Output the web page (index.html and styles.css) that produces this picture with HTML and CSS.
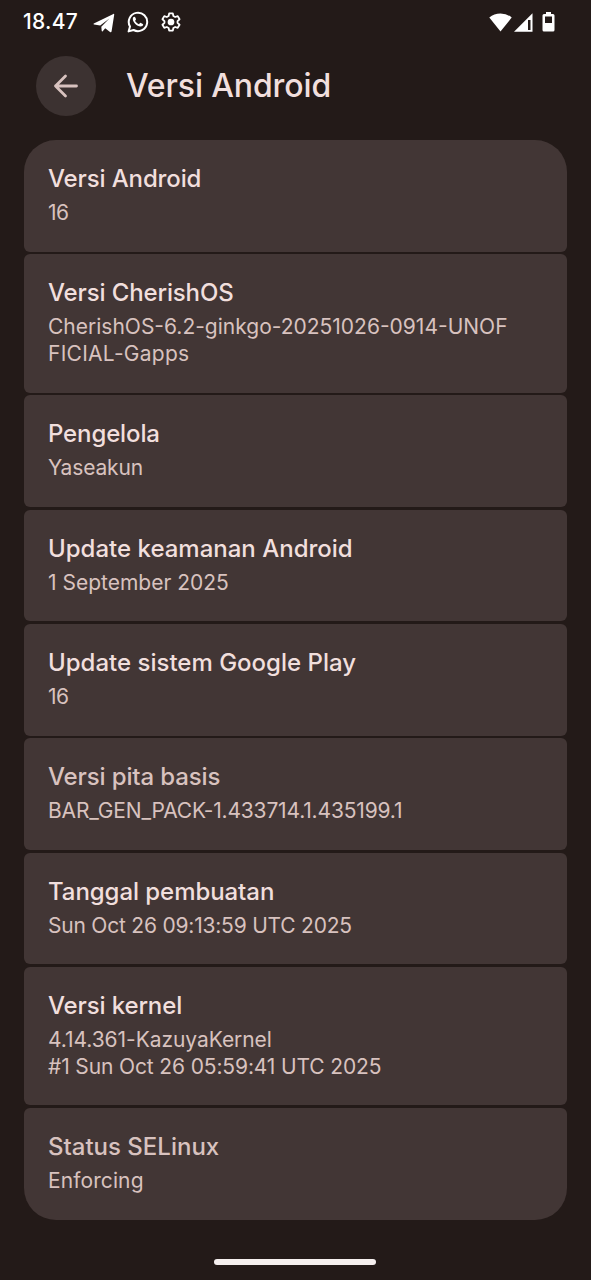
FILE: index.html
```html
<!DOCTYPE html>
<html lang="id">
<head>
<meta charset="utf-8">
<title>Versi Android</title>
<link rel="stylesheet" href="styles.css">
</head>
<body>
<div class="screen">
  <header class="status">
    <span class="clock">18.47</span>
    <svg class="telegram" viewBox="0 0 22 20"><path d="M.8 10.500 20.400.9c.6-.3.9.1.8.8L18.600 18.300c-.2.9-.8 1.100-1.600.6L12.200 15.300l-2.500 2.900c-.5.5-.9.3-1-.4L8.300 13.800 16.400 5.500 7.200 12.600 1 11.400c-.6-.2-.6-.6-.2-.9Z"/></svg>
    <svg class="whatsapp" viewBox="0 0 22 22"><path class="line" d="M1.600 20.400 3 15.500A9.200 9.200 0 1 1 6.600 19Z"/><path d="M7.300 5.800c-.7 0-1.500.9-1.500 2.100 0 3.100 4.200 7.500 7.700 7.500 1.500 0 2.700-1 2.700-2 0-.4-2.500-1.600-2.900-1.600-.5 0-.9 1.400-1.400 1.400-.9 0-3.700-2.500-3.700-3.400 0-.5.8-1 .8-1.500 0-.4-.8-2.500-1.700-2.500Z"/></svg>
    <svg class="gear" viewBox="0 0 22 22"><path class="line" d="M9 1.500h4l.6 2.900 2 1.100 2.800-1 2 3.500-2.200 2v2l2.200 2-2 3.500-2.800-1-2 1.100-.6 2.900H9l-.6-2.900-2-1.100-2.800 1-2-3.500 2.200-2v-2l-2.200-2 2-3.500 2.800 1 2-1.100Z"/><circle cx="11" cy="11" r="3.700"/></svg>
    <span class="spacer"></span>
    <svg class="wifi" viewBox="0 0 23 19"><path d="M.3 4.500Q5 .5 11.500.5T22.700 4.500L11.500 18.500Z"/></svg>
    <svg class="signal" viewBox="0 0 19 19"><path fill-rule="evenodd" d="M18.500.2V18.700H0ZM14 7v10h2.500V7Z"/></svg>
    <svg class="battery" viewBox="0 0 13 20"><path fill-rule="evenodd" d="M4 0h5v2h2q1.500 0 1.500 1.500v14.500q0 1.500-1.500 1.500H2Q.5 19.500.5 18V3.500Q.5 2 2 2h2ZM3 4.500v6.500h7V4.500Z"/></svg>
  </header>
  <div class="toolbar">
    <div class="back"><svg class="arrow" viewBox="0 0 26 26"><path d="M12.500 3 2.500 13l10 10M2.500 13H23.500"/></svg></div>
    <h1>Versi Android</h1>
  </div>
  <main class="list">
    <section class="card"><h2 class="snug">Versi Android</h2><p class="pair">16</p></section>
    <section class="card tall"><h2 class="snug">Versi CherishOS</h2><p>CherishOS-6.2-ginkgo-20251026-0914-UNOF<br><span class="wide">FICIAL-Gapps</span></p></section>
    <section class="card"><h2 class="snug">Pengelola</h2><p class="tight">Yaseakun</p></section>
    <section class="card"><h2>Update keamanan Android</h2><p>1 September 2025</p></section>
    <section class="card"><h2>Update sistem Google Play</h2><p class="pair">16</p></section>
    <section class="card muted"><h2 class="snug">Versi pita basis</h2><p class="tight">BAR_GEN_PACK-1.433714.1.435199.1</p></section>
    <section class="card"><h2 class="near">Tanggal pembuatan</h2><p class="tighter">Sun Oct 26 09:13:59 UTC 2025</p></section>
    <section class="card tall"><h2 class="snug">Versi kernel</h2><p><span class="near">4.14.361-KazuyaKernel</span><br><span class="snug">#1 Sun Oct 26 05:59:41 UTC 2025</span></p></section>
    <section class="card muted"><h2>Status SELinux</h2><p class="loose">Enforcing</p></section>
  </main>
  <div class="home"></div>
</div>
</body>
</html>
```
FILE: styles.css
```css
* { box-sizing: border-box; }
body { margin: 0; background: #231a18; font-family: Inter, Roboto, sans-serif; color: #f1dfdd; }
.screen { width: 591px; height: 1280px; display: flex; flex-direction: column; overflow: hidden; }

/* Status bar */
.status { height: 44px; padding: 0 36px 0 23px; display: flex; align-items: center; color: #fff; }
.status svg { fill: #fff; flex: none; }
.status .line { fill: none; stroke: #fff; stroke-width: 2; stroke-linejoin: round; }
.clock { font-size: 21px; line-height: 44px; font-weight: 500; width: 70px; letter-spacing: .3px; }
.telegram { width: 22px; height: 20px; margin-top: 2px; }
.whatsapp { width: 22px; height: 22px; margin-left: 11.5px; }
.gear { width: 20px; height: 20px; margin-left: 12.5px; }
.spacer { flex: 1; }
.wifi { width: 23px; height: 19px; }
.signal { width: 19px; height: 19px; margin-left: 2px; }
.battery { width: 13px; height: 20px; margin-left: 9px; }

/* Title row */
.toolbar { height: 96px; padding: 12px 36px; display: flex; align-items: flex-start; gap: 30px; }
.back { width: 60px; height: 60px; border-radius: 50%; background: #3c3231; display: grid; place-items: center; }
.arrow { width: 26px; height: 26px; fill: none; stroke: #d8c2bf; stroke-width: 2.8; stroke-linecap: round; stroke-linejoin: round; }
h1 { margin: 0; font-size: 32px; line-height: 59px; font-weight: 500; letter-spacing: -.12px; }

/* Preference cards */
.list { margin: 0 24px; display: flex; flex-direction: column; gap: 2.7px; }
.card { height: 111.6px; padding: 24px; background: #423635; border-radius: 6px; }
.card.tall { height: 138.5px; }
.card:first-child { border-radius: 32px 32px 6px 6px; }
.card:last-child { border-radius: 6px 6px 32px 32px; }
h2 { margin: 0; font-size: 24px; line-height: 30px; font-weight: 500; white-space: nowrap; }
p { margin: 5px 0 0; font-size: 21px; line-height: 27px; color: #d8c2bf; white-space: nowrap; }
.muted h2 { color: #d8c2bf; }

/* Tracking */
.near { letter-spacing: -.06px; }
.snug { letter-spacing: -.13px; }
.tight { letter-spacing: -.17px; }
.tighter { letter-spacing: -.21px; }
.pair { letter-spacing: -.6px; }
.loose { letter-spacing: .1px; }
.wide { letter-spacing: .27px; }

.home { width: 162px; height: 6px; border-radius: 3px; background: #f5efee; margin: 39px 0 0 214px; }
```
